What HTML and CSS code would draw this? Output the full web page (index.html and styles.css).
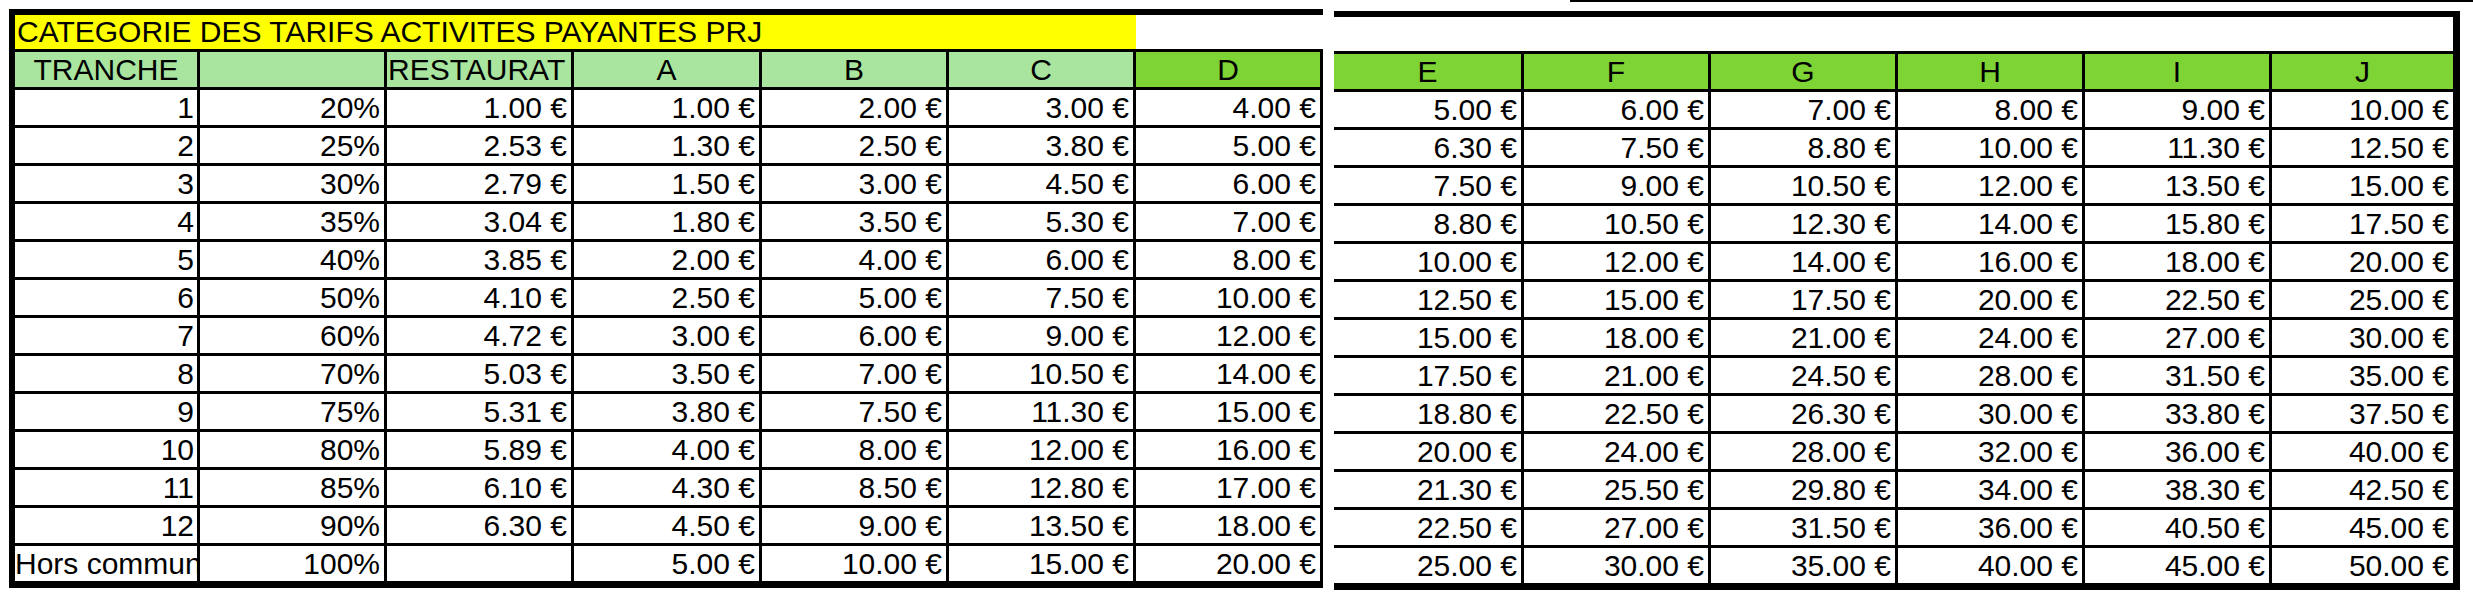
FILE: index.html
```html
<!DOCTYPE html>
<html lang="fr">
<head>
<meta charset="utf-8">
<title>Catégorie des tarifs</title>
<link rel="stylesheet" href="styles.css">
</head>
<body>
<div class="topline"></div>
<div class="sheets">
  <div class="sheet left">
    <div class="cell title yellow">CATEGORIE DES TARIFS ACTIVITES PAYANTES PRJ</div>
    <div class="cell title blank"></div>

    <div class="cell hd">TRANCHE</div>
    <div class="cell hd"></div>
    <div class="cell hd l">RESTAURAT</div>
    <div class="cell hd">A</div>
    <div class="cell hd">B</div>
    <div class="cell hd">C</div>
    <div class="cell hd2">D</div>

    <div class="cell t">1</div><div class="cell r">20%</div><div class="cell r">1.00 €</div><div class="cell r">1.00 €</div><div class="cell r">2.00 €</div><div class="cell r">3.00 €</div><div class="cell r">4.00 €</div>
    <div class="cell t">2</div><div class="cell r">25%</div><div class="cell r">2.53 €</div><div class="cell r">1.30 €</div><div class="cell r">2.50 €</div><div class="cell r">3.80 €</div><div class="cell r">5.00 €</div>
    <div class="cell t">3</div><div class="cell r">30%</div><div class="cell r">2.79 €</div><div class="cell r">1.50 €</div><div class="cell r">3.00 €</div><div class="cell r">4.50 €</div><div class="cell r">6.00 €</div>
    <div class="cell t">4</div><div class="cell r">35%</div><div class="cell r">3.04 €</div><div class="cell r">1.80 €</div><div class="cell r">3.50 €</div><div class="cell r">5.30 €</div><div class="cell r">7.00 €</div>
    <div class="cell t">5</div><div class="cell r">40%</div><div class="cell r">3.85 €</div><div class="cell r">2.00 €</div><div class="cell r">4.00 €</div><div class="cell r">6.00 €</div><div class="cell r">8.00 €</div>
    <div class="cell t">6</div><div class="cell r">50%</div><div class="cell r">4.10 €</div><div class="cell r">2.50 €</div><div class="cell r">5.00 €</div><div class="cell r">7.50 €</div><div class="cell r">10.00 €</div>
    <div class="cell t">7</div><div class="cell r">60%</div><div class="cell r">4.72 €</div><div class="cell r">3.00 €</div><div class="cell r">6.00 €</div><div class="cell r">9.00 €</div><div class="cell r">12.00 €</div>
    <div class="cell t">8</div><div class="cell r">70%</div><div class="cell r">5.03 €</div><div class="cell r">3.50 €</div><div class="cell r">7.00 €</div><div class="cell r">10.50 €</div><div class="cell r">14.00 €</div>
    <div class="cell t">9</div><div class="cell r">75%</div><div class="cell r">5.31 €</div><div class="cell r">3.80 €</div><div class="cell r">7.50 €</div><div class="cell r">11.30 €</div><div class="cell r">15.00 €</div>
    <div class="cell t">10</div><div class="cell r">80%</div><div class="cell r">5.89 €</div><div class="cell r">4.00 €</div><div class="cell r">8.00 €</div><div class="cell r">12.00 €</div><div class="cell r">16.00 €</div>
    <div class="cell t">11</div><div class="cell r">85%</div><div class="cell r">6.10 €</div><div class="cell r">4.30 €</div><div class="cell r">8.50 €</div><div class="cell r">12.80 €</div><div class="cell r">17.00 €</div>
    <div class="cell t">12</div><div class="cell r">90%</div><div class="cell r">6.30 €</div><div class="cell r">4.50 €</div><div class="cell r">9.00 €</div><div class="cell r">13.50 €</div><div class="cell r">18.00 €</div>
    <div class="cell l">Hors commune</div><div class="cell r">100%</div><div class="cell r"></div><div class="cell r">5.00 €</div><div class="cell r">10.00 €</div><div class="cell r">15.00 €</div><div class="cell r">20.00 €</div>
  </div>

  <div class="sheet right">
    <div class="cell title blank wide"></div>

    <div class="cell hd2">E</div>
    <div class="cell hd2">F</div>
    <div class="cell hd2">G</div>
    <div class="cell hd2">H</div>
    <div class="cell hd2">I</div>
    <div class="cell hd2">J</div>

    <div class="cell r">5.00 €</div><div class="cell r">6.00 €</div><div class="cell r">7.00 €</div><div class="cell r">8.00 €</div><div class="cell r">9.00 €</div><div class="cell r">10.00 €</div>
    <div class="cell r">6.30 €</div><div class="cell r">7.50 €</div><div class="cell r">8.80 €</div><div class="cell r">10.00 €</div><div class="cell r">11.30 €</div><div class="cell r">12.50 €</div>
    <div class="cell r">7.50 €</div><div class="cell r">9.00 €</div><div class="cell r">10.50 €</div><div class="cell r">12.00 €</div><div class="cell r">13.50 €</div><div class="cell r">15.00 €</div>
    <div class="cell r">8.80 €</div><div class="cell r">10.50 €</div><div class="cell r">12.30 €</div><div class="cell r">14.00 €</div><div class="cell r">15.80 €</div><div class="cell r">17.50 €</div>
    <div class="cell r">10.00 €</div><div class="cell r">12.00 €</div><div class="cell r">14.00 €</div><div class="cell r">16.00 €</div><div class="cell r">18.00 €</div><div class="cell r">20.00 €</div>
    <div class="cell r">12.50 €</div><div class="cell r">15.00 €</div><div class="cell r">17.50 €</div><div class="cell r">20.00 €</div><div class="cell r">22.50 €</div><div class="cell r">25.00 €</div>
    <div class="cell r">15.00 €</div><div class="cell r">18.00 €</div><div class="cell r">21.00 €</div><div class="cell r">24.00 €</div><div class="cell r">27.00 €</div><div class="cell r">30.00 €</div>
    <div class="cell r">17.50 €</div><div class="cell r">21.00 €</div><div class="cell r">24.50 €</div><div class="cell r">28.00 €</div><div class="cell r">31.50 €</div><div class="cell r">35.00 €</div>
    <div class="cell r">18.80 €</div><div class="cell r">22.50 €</div><div class="cell r">26.30 €</div><div class="cell r">30.00 €</div><div class="cell r">33.80 €</div><div class="cell r">37.50 €</div>
    <div class="cell r">20.00 €</div><div class="cell r">24.00 €</div><div class="cell r">28.00 €</div><div class="cell r">32.00 €</div><div class="cell r">36.00 €</div><div class="cell r">40.00 €</div>
    <div class="cell r">21.30 €</div><div class="cell r">25.50 €</div><div class="cell r">29.80 €</div><div class="cell r">34.00 €</div><div class="cell r">38.30 €</div><div class="cell r">42.50 €</div>
    <div class="cell r">22.50 €</div><div class="cell r">27.00 €</div><div class="cell r">31.50 €</div><div class="cell r">36.00 €</div><div class="cell r">40.50 €</div><div class="cell r">45.00 €</div>
    <div class="cell r">25.00 €</div><div class="cell r">30.00 €</div><div class="cell r">35.00 €</div><div class="cell r">40.00 €</div><div class="cell r">45.00 €</div><div class="cell r">50.00 €</div>
  </div>
</div>
</body>
</html>
```

FILE: styles.css
```css
html, body {
  margin: 0;
  padding: 0;
  background: #ffffff;
}

body {
  font-family: "Liberation Sans", Arial, sans-serif;
  font-size: 30px;
  color: #000000;
  width: 2473px;
  height: 598px;
  overflow: hidden;
}

.topline {
  height: 2px;
  margin-left: 1570px;
  background: #000000;
}

.sheets {
  display: flex;
  align-items: flex-start;
  gap: 11px;
  padding: 7px 0 0 9px;
}

.sheet {
  display: grid;
  background: #ffffff;
}

.left {
  grid-template-columns: 185px 187px 187px 188px 187px 187px 187px;
  border-top: 6px solid #000;
  border-left: 6px solid #000;
  border-bottom: 4px solid #000;
}

.right {
  margin-top: 2px;
  grid-template-columns: 190px 187px 187px 187px 187px 181px;
  border-top: 6px solid #000;
  border-right: 7px solid #000;
  border-bottom: 4px solid #000;
}

.cell {
  box-sizing: border-box;
  height: 38px;
  line-height: 35px;
  border-right: 3px solid #000;
  border-bottom: 3px solid #000;
  white-space: nowrap;
  overflow: hidden;
  text-align: center;
}

.right .cell:nth-child(6n+1) {
  border-right: 0;
}

.title {
  height: 37px;
  line-height: 34px;
  border-right: 0;
}

.yellow {
  grid-column: span 6;
  background: #ffff00;
  text-align: left;
  padding-left: 2px;
}

.wide {
  grid-column: span 6;
}

.hd {
  background: #a9e59f;
}

.hd2 {
  background: #7ed335;
}

.l {
  text-align: left;
  padding-left: 0;
}

.hd.l {
  padding-left: 1px;
}

.r {
  text-align: right;
  padding-right: 4px;
}

.t {
  text-align: right;
  padding-right: 3px;
}
```
